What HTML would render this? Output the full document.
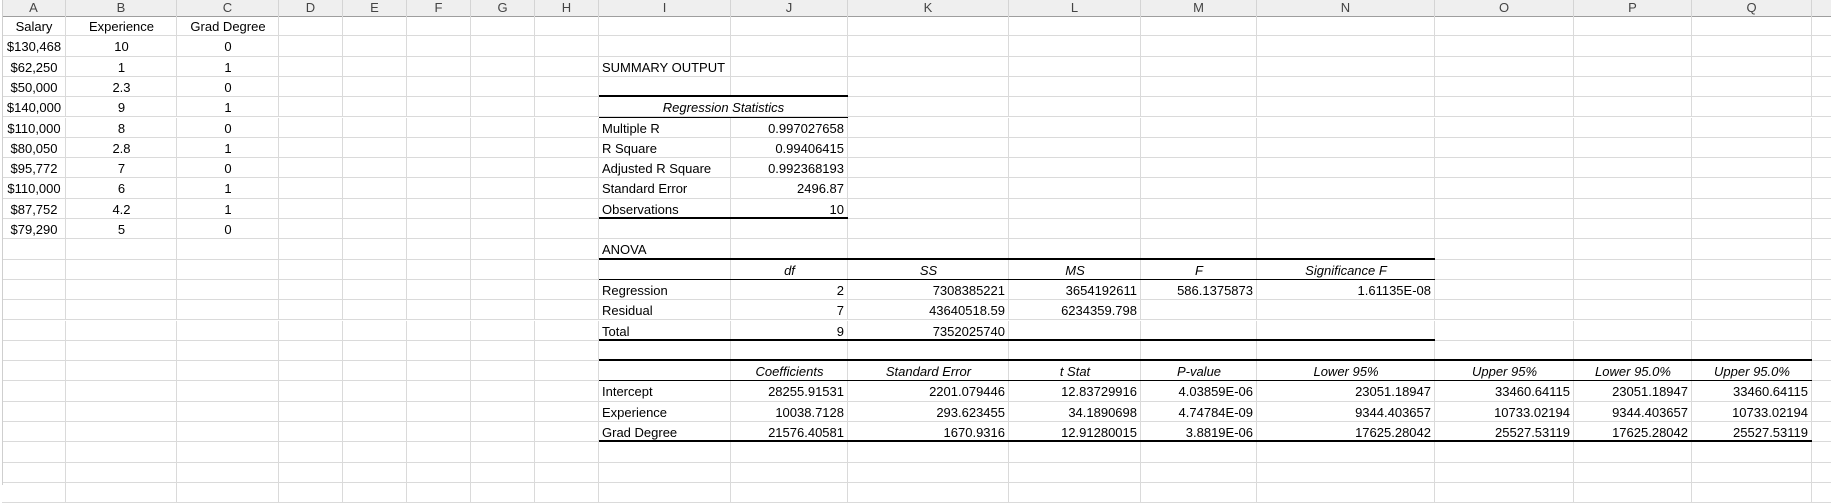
<!DOCTYPE html>
<html><head><meta charset="utf-8">
<style>
html,body{margin:0;padding:0;background:#fff;}
body{width:1831px;height:485px;overflow:hidden;position:relative;font-family:"Liberation Sans",Arial,sans-serif;font-size:13px;color:#000;}
.c{position:absolute;box-sizing:border-box;border-right:1px solid #dadada;border-bottom:1px solid #dadada;white-space:nowrap;line-height:20px;padding:0 3px;overflow:visible;}
.h{position:absolute;box-sizing:border-box;background:#efefef;border-right:1px solid #d4d4d4;border-bottom:1px solid #9e9e9e;text-align:center;color:#444;font-size:13px;line-height:16px;}
.t{position:absolute;white-space:nowrap;line-height:20px;font-size:13px;}
.bl{position:absolute;background:#000;}
</style></head><body>
<script>
var X=[2,66,177,279,343,407,471,535,599,731,848,1009,1141,1257,1435,1574,1692,1812,1900];
var L="ABCDEFGHIJKLMNOPQR";
var RH=20.3,TOP=16;
function ry(r){return TOP+RH*(r-1);}
var h='';
for(var i=0;i<X.length-1;i++){
  h+='<div class="h" style="left:'+X[i]+'px;top:0;width:'+(X[i+1]-X[i])+'px;height:17px">'+L[i]+'</div>';
  for(var r=1;r<=24;r++){
    h+='<div class="c" style="left:'+X[i]+'px;top:'+ry(r)+'px;width:'+(X[i+1]-X[i])+'px;height:'+RH+'px"></div>';
  }
}
h+='<div style="position:absolute;left:2px;top:0;width:1px;height:485px;background:#cfcfcf"></div>';
h+='<div style="position:absolute;left:729px;top:'+ry(5)+'px;width:4px;height:19px;background:#fff"></div>';
function t(col,row,txt,al,it,span){
  var ci=L.indexOf(col);var x0=X[ci],x1=X[ci+(span||1)];
  var s='top:'+(ry(row)+1)+'px;';
  if(al=='r')s+='left:'+x0+'px;width:'+(x1-x0-4)+'px;text-align:right;';
  else if(al=='c')s+='left:'+x0+'px;width:'+(x1-x0)+'px;text-align:center;';
  else s+='left:'+(x0+3)+'px;';
  if(it)s+='font-style:italic;';
  h+='<div class="t" style="'+s+'">'+txt+'</div>';
}
var data=[["Salary","Experience","Grad Degree"],["$130,468","10","0"],["$62,250","1","1"],["$50,000","2.3","0"],["$140,000","9","1"],["$110,000","8","0"],["$80,050","2.8","1"],["$95,772","7","0"],["$110,000","6","1"],["$87,752","4.2","1"],["$79,290","5","0"]];
data.forEach(function(d,k){t('A',k+1,d[0],'c');t('B',k+1,d[1],'c');t('C',k+1,d[2],'c');});
t('I',3,'SUMMARY OUTPUT');
t('I',5,'Regression Statistics','c',1,2);
[["Multiple R","0.997027658"],["R Square","0.99406415"],["Adjusted R Square","0.992368193"],["Standard Error","2496.87"],["Observations","10"]].forEach(function(d,k){t('I',6+k,d[0]);t('J',6+k,d[1],'r');});
t('I',12,'ANOVA');
['df','SS','MS','F','Significance F'].forEach(function(s,k){t('JKLMN'[k],13,s,'c',1);});
t('I',14,'Regression');t('J',14,'2','r');t('K',14,'7308385221','r');t('L',14,'3654192611','r');t('M',14,'586.1375873','r');t('N',14,'1.61135E-08','r');
t('I',15,'Residual');t('J',15,'7','r');t('K',15,'43640518.59','r');t('L',15,'6234359.798','r');
t('I',16,'Total');t('J',16,'9','r');t('K',16,'7352025740','r');
['Coefficients','Standard Error','t Stat','P-value','Lower 95%','Upper 95%','Lower 95.0%','Upper 95.0%'].forEach(function(s,k){t('JKLMNOPQ'[k],18,s,'c',1);});
var rows=[["Intercept","28255.91531","2201.079446","12.83729916","4.03859E-06","23051.18947","33460.64115","23051.18947","33460.64115"],
["Experience","10038.7128","293.623455","34.1890698","4.74784E-09","9344.403657","10733.02194","9344.403657","10733.02194"],
["Grad Degree","21576.40581","1670.9316","12.91280015","3.8819E-06","17625.28042","25527.53119","17625.28042","25527.53119"]];
rows.forEach(function(d,k){t('I',19+k,d[0]);for(var j=1;j<9;j++)t('JKLMNOPQ'[j-1],19+k,d[j],'r');});
function line(x0,x1,y,w){h+='<div class="bl" style="left:'+x0+'px;top:'+(y-(w>1?1:0))+'px;width:'+(x1-x0)+'px;height:'+w+'px"></div>';}
function yb(r){return Math.round(ry(r+1))-1;}
line(599,848,yb(4),2);line(599,848,yb(5),1);line(599,848,yb(10),2);
line(599,1435,yb(12),2);line(599,1435,yb(13),1);line(599,1435,yb(16),2);
line(599,1812,yb(17),2);line(599,1812,yb(18),1);line(599,1812,yb(21),2);
document.write(h);
</script>
</body></html>
